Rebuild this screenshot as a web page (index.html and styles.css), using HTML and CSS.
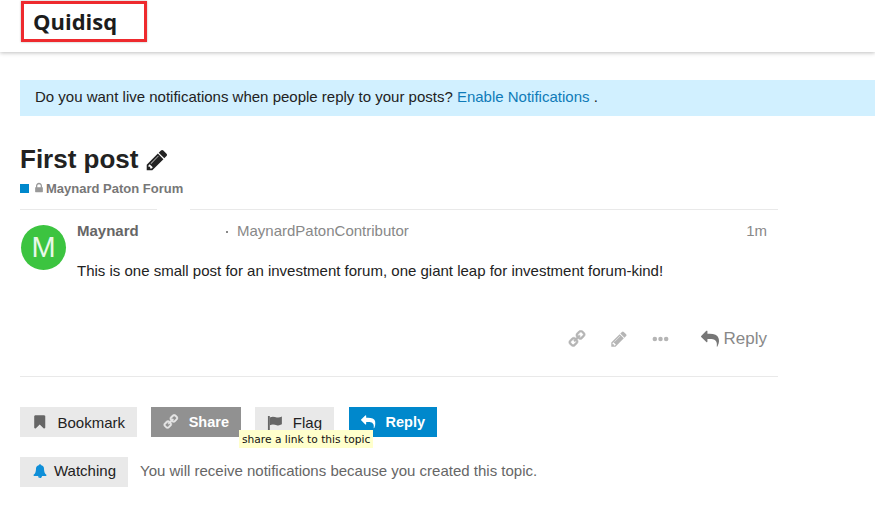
FILE: index.html
```html
<!DOCTYPE html>
<html lang="en">
<head>
<meta charset="utf-8">
<title>First post</title>
<link rel="stylesheet" href="styles.css">
</head>
<body>
<svg class="defs" aria-hidden="true">
  <symbol id="i-reply" viewBox="0 0 1792 1792"><path d="M1792 1120q0 166-127 451-3 7-10.500 24t-13.500 30-13 22q-12 17-28 17-15 0-23.500-10t-8.500-25q0-9 2.500-26.500t2.500-23.500q5-68 5-123 0-101-17.500-181t-48.500-138.500-80-101-105.500-69.500-133-42.500-154-21.500-175.500-6h-224v256q0 26-19 45t-45 19-45-19l-512-512q-19-19-19-45t19-45l512-512q19-19 45-19t45 19 19 45v256h224q713 0 875 403 53 134 53 333z"/></symbol>
  <symbol id="i-pencil" viewBox="0 0 1792 1792"><path d="M491 1536l91-91-235-235-91 91v107h128v128h107zm523-928q0-22-22-22-10 0-17 7l-542 542q-7 7-7 17 0 22 22 22 10 0 17-7l542-542q7-7 7-17zm-54-192l416 416-832 832h-416v-416zm683 96q0 53-37 90l-166 166-416-416 166-165q36-38 90-38 53 0 91 38l235 234q37 39 37 91z"/></symbol>
  <symbol id="i-link" viewBox="0 0 1792 1792"><path transform="matrix(-1 0 0 1 1792 0)" d="M1520 1216q0-40-28-68l-208-208q-28-28-68-28-42 0-72 32 3 3 19 18.500t21.500 21.500 15 19 13 25.500 3.500 27.500q0 40-28 68t-68 28q-15 0-27.500-3.500t-25.500-13-19-15-21.500-21.500-18.500-19q-33 31-33 73 0 40 28 68l206 207q27 27 68 27 40 0 68-26l147-146q28-28 28-67zm-703-705q0-40-28-68l-206-207q-28-28-68-28-39 0-68 27l-147 146q-28 28-28 67 0 40 28 68l208 208q27 27 68 27 42 0 72-31-3-3-19-18.500t-21.500-21.500-15-19-13-25.500-3.500-27.500q0-40 28-68t68-28q15 0 27.500 3.500t25.500 13 19 15 21.500 21.500 18.500 19q33-31 33-73zm895 705q0 120-85 203l-147 146q-83 83-203 83-121 0-204-85l-206-207q-83-83-83-203 0-123 88-209l-88-88q-86 88-208 88-120 0-204-84l-208-208q-84-84-84-204t85-203l147-146q83-83 203-83 121 0 204 85l206 207q83 83 83 203 0 123-88 209l88 88q86-88 208-88 120 0 204 84l208 208q84 84 84 204z"/></symbol>
  <symbol id="i-bookmark" viewBox="0 0 1792 1792"><path d="M1420 128q23 0 44 9 33 13 52.500 41t19.500 62v1289q0 34-19.500 62t-52.500 41q-19 8-44 8-48 0-83-32l-441-424-441 424q-36 33-83 33-23 0-44-9-33-13-52.500-41t-19.500-62v-1289q0-34 19.500-62t52.500-41q21-9 44-9h1048z"/></symbol>
  <symbol id="i-flag" viewBox="0 0 17 17"><path d="M1 1.500h2v15h-2z"/><path d="M3 3c3-1.500 5.500-.5 7.500 0s3.500 0 5.500-1v8.500c-2 1-3.500 1.500-5.500 1s-4.500-1.500-7.500 0z"/></symbol>
  <symbol id="i-bell" viewBox="0 0 1792 1792"><path d="M912 1696q0-16-16-16-59 0-101.500-42.500t-42.500-101.500q0-16-16-16t-16 16q0 73 51.500 124.500t124.500 51.500q16 0 16-16zm816-288q0 52-38 90t-90 38h-448q0 106-75 181t-181 75-181-75-75-181h-448q-52 0-90-38t-38-90q50-42 91-88t85-119.500 74.500-158.500 50-206 19.500-260q0-152 117-282.500t307-158.500q-8-19-8-39 0-40 28-68t68-28 68 28 28 68q0 20-8 39 190 28 307 158.500t117 282.500q0 139 19.500 260t50 206 74.500 158.500 85 119.500 91 88z"/></symbol>
  <symbol id="i-lock" viewBox="0 0 1792 1792"><path d="M640 768h512v-192q0-106-75-181t-181-75-181 75-75 181v192zm832 96v576q0 40-28 68t-68 28h-960q-40 0-68-28t-28-68v-576q0-40 28-68t68-28h32v-192q0-184 132-316t316-132 316 132 132 316v192h32q40 0 68 28t28 68z"/></symbol>
  <symbol id="i-dots" viewBox="0 0 18 6"><circle cx="3" cy="3" r="2.400"/><circle cx="9" cy="3" r="2.400"/><circle cx="15" cy="3" r="2.400"/></symbol>
</svg>

<header class="site-header">
  <div class="logo-box"><span class="logo">Quidisq</span></div>
</header>

<div class="notice">Do you want live notifications when people reply to your posts? <a class="link" href="#">Enable Notifications</a> .</div>

<main class="content">
  <h1 class="title">First post <svg class="title-pencil"><use href="#i-pencil"/></svg></h1>
  <div class="category">
    <span class="cat-square"></span>
    <svg class="cat-lock"><use href="#i-lock"/></svg>
    <span>Maynard Paton Forum</span>
  </div>

  <article class="post">
    <div class="avatar">M</div>
    <div class="post-main">
      <div class="post-meta">
        <span class="author">Maynard</span>
        <span class="speck"></span>
        <span class="handle">MaynardPatonContributor</span>
        <span class="age">1m</span>
      </div>
      <p class="post-text">This is one small post for an investment forum, one giant leap for investment forum-kind!</p>
      <div class="post-actions">
        <svg class="act act-link"><use href="#i-link"/></svg>
        <svg class="act act-pencil"><use href="#i-pencil"/></svg>
        <svg class="act-dots"><use href="#i-dots"/></svg>
        <span class="act-reply"><svg class="act-reply-icon"><use href="#i-reply"/></svg>Reply</span>
      </div>
    </div>
  </article>

  <div class="buttons">
    <button class="btn btn-bookmark"><svg class="btn-icon"><use href="#i-bookmark"/></svg>Bookmark</button>
    <span class="share-wrap">
      <button class="btn btn-share"><svg class="btn-icon"><use href="#i-link"/></svg>Share</button>
      <span class="tooltip">share a link to this topic</span>
    </span>
    <button class="btn btn-flag"><svg class="btn-icon"><use href="#i-flag"/></svg>Flag</button>
    <button class="btn btn-reply"><svg class="btn-icon"><use href="#i-reply"/></svg>Reply</button>
  </div>

  <div class="watch">
    <button class="btn btn-watch"><svg class="btn-icon bell"><use href="#i-bell"/></svg>Watching</button>
    <span class="watch-text">You will receive notifications because you created this topic.</span>
  </div>
</main>
</body>
</html>
```
FILE: styles.css
```css
* { box-sizing: border-box; }
html, body { margin: 0; padding: 0; }
body {
  width: 875px;
  height: 505px;
  overflow: hidden;
  background: #fff;
  color: #222;
  font-family: "Liberation Sans", Arial, sans-serif;
  font-size: 15px;
}
.defs { display: none; }

.site-header {
  height: 52px;
  padding: 1px 0 0 21px;
  background: #fff;
  box-shadow: 0 1px 4px rgba(0, 0, 0, .25);
}
.logo-box {
  width: 126px;
  height: 41px;
  padding: 3px 0 0 9px;
  border: 3px solid #ee2a2e;
  box-shadow: 0 0 2px rgba(0, 0, 0, .3);
}
.logo {
  font-family: "Open Sans", sans-serif;
  font-weight: 700;
  font-size: 22px;
  line-height: 28px;
  color: #1c1c1c;
}

.notice {
  margin: 28px 0 0 20px;
  height: 36px;
  padding-left: 15px;
  background: #d1f0ff;
  font-size: 15px;
  line-height: 34px;
  color: #222;
}
.link { color: #0f7bb8; text-decoration: none; }

.content { width: 758px; margin-left: 20px; }
.title {
  margin: 26px 0 0;
  height: 34px;
  font-size: 26px;
  line-height: 34px;
  font-weight: 700;
  color: #222;
}
.title-pencil { width: 24px; height: 24px; fill: #222; vertical-align: -4px; margin-left: -1px; }

.category {
  display: flex;
  align-items: center;
  height: 18px;
  margin-top: 3px;
  font-size: 13px;
  font-weight: 700;
  color: #777;
}
.cat-square { width: 9px; height: 9px; background: #0088cc; margin-right: 4px; }
.cat-lock { width: 12px; height: 12px; fill: #999; margin-right: 1px; }

.post {
  display: flex;
  height: 168px;
  margin-top: 12px;
  padding: 15px 0 0 1px;
  border-top: 1px solid #e9e9e9;
  border-bottom: 1px solid #e9e9e9;
  position: relative;
}
.post::before {
  content: "";
  position: absolute;
  left: 137px;
  top: -1px;
  width: 33px;
  height: 1px;
  background: #fff;
}
.avatar {
  flex: none;
  width: 45px;
  height: 45px;
  border-radius: 50%;
  background: #3cc440;
  color: #e8f8e8;
  font-size: 29px;
  line-height: 45px;
  text-align: center;
}
.post-main { flex: 1; padding-left: 11px; }
.post-meta {
  display: flex;
  align-items: center;
  height: 10px;
  font-size: 15px;
  padding-right: 11px;
}
.author { font-weight: 700; color: #666; width: 149px; position: relative; }
.speck {
  position: absolute;
  left: 206px;
  width: 2px;
  height: 2px;
  margin-top: 3px;
  background: #888;
}
.handle { color: #888; margin-left: 11px; }
.age { margin-left: auto; color: #888; font-size: 15px; }
.post-text {
  margin: 26px 0 0;
  font-size: 15px;
  line-height: 20px;
  color: #222;
}
.post-actions {
  display: flex;
  align-items: center;
  justify-content: flex-end;
  margin-top: 46px;
  height: 24px;
  padding-right: 11px;
}
.act { width: 18px; height: 18px; fill: #b5b5b5; }
.act-link { margin-right: 24px; stroke: #b5b5b5; stroke-width: 50px; }
.act-pencil { margin-right: 24px; }
.act-dots { width: 17px; height: 6px; fill: #b5b5b5; margin-right: 32px; }
.act-reply { display: flex; align-items: center; font-size: 17px; color: #888; }
.act-reply-icon { width: 18px; height: 18px; fill: #777; margin-right: 5px; }

.buttons {
  display: flex;
  gap: 14px;
  margin-top: 30px;
}
.share-wrap { position: relative; display: flex; }
.btn {
  display: flex;
  align-items: center;
  height: 30px;
  padding: 0 12px;
  border: 0;
  background: #e9e9e9;
  color: #222;
  font-family: inherit;
  font-size: 15px;
}
.btn-icon { width: 16px; height: 16px; fill: #666; margin-right: 10px; }
.btn-bookmark { width: 117px; }
.btn-share { width: 90px; background: #919191; color: #fff; font-weight: 700; font-size: 14.500px; }
.btn-share .btn-icon { fill: #e6e6e6; stroke: #e6e6e6; stroke-width: 50px; }
.btn-flag { width: 79px; }
.btn-flag .btn-icon { width: 17px; height: 17px; margin-right: 10px; }
.btn-reply { width: 88px; margin-left: 1px; background: #0088cc; color: #fff; font-weight: 700; font-size: 14.500px; }
.btn-reply .btn-icon { fill: #fff; margin-right: 10px; }
.tooltip {
  position: absolute;
  left: 88px;
  top: 23px;
  height: 18px;
  padding: 0 3px;
  background: #ffffcc;
  font-family: "DejaVu Sans", sans-serif;
  font-size: 10.670px;
  line-height: 19px;
  color: #111;
  white-space: nowrap;
}

.watch {
  display: flex;
  align-items: center;
  gap: 12px;
  margin-top: 20px;
}
.btn-watch { width: 108px; padding-bottom: 3px; }
.bell { width: 14px; height: 16px; fill: #0f8fd8; margin: 0 7px 0 1px; }
.watch-text { font-size: 15px; color: #666; padding-bottom: 3px; }
```
